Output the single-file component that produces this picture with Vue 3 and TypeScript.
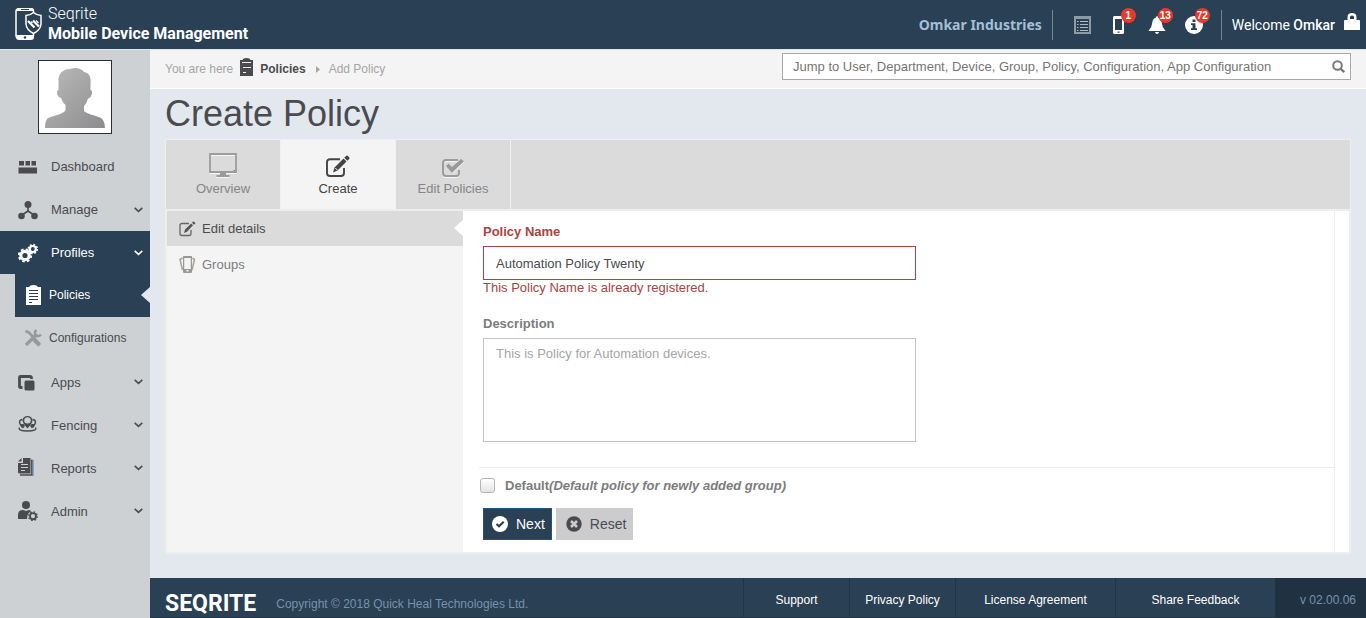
<script setup lang="ts">
import { ref } from 'vue'

interface NavItem {
  key: string
  label: string
  expandable: boolean
}

const topNav: NavItem[] = [
  { key: 'dashboard', label: 'Dashboard', expandable: false },
  { key: 'manage', label: 'Manage', expandable: true },
  { key: 'profiles', label: 'Profiles', expandable: true },
]
const bottomNav: NavItem[] = [
  { key: 'apps', label: 'Apps', expandable: true },
  { key: 'fencing', label: 'Fencing', expandable: true },
  { key: 'reports', label: 'Reports', expandable: true },
  { key: 'admin', label: 'Admin', expandable: true },
]

const policyName = ref('Automation Policy Twenty')
const description = ref('')
const isDefault = ref(false)
const search = ref('')

function reset(): void {
  policyName.value = ''
  description.value = ''
  isDefault.value = false
}
</script>

<template>
  <div class="page">
    <header class="topbar">
      <a href="#" class="brand">
        <svg class="brand-icon" width="27" height="34" viewBox="0 0 27 34" fill="none">
          <path d="M11 31H3.500Q1 31 1 28.500V4.500Q1 2 3.500 2H16Q18.500 2 18.500 4.500V6M18.500 27V29" stroke="#fff" stroke-width="1.500" />
          <path d="M1 4Q1 1 4 1H16Q19 1 19 4ZM1 28H19V30Q19 33 16 33H4Q1 33 1 30Z" fill="#fff" />
          <path d="M6 2.500H14" stroke="#2a4054" />
          <circle cx="10" cy="30.500" r="1.300" fill="#2a4054" />
          <path d="M18.500 5.500Q22 8.500 26 8.500V17Q25.500 23 18.500 26.500Q11.500 23 11 17V8.500Q15 8.500 18.500 5.500Z" fill="#2a4054" stroke="#fff" stroke-width="1.500" />
          <path d="M13 14L19.500 20.500M18 13.500L24 19.500" stroke="#fff" stroke-width="2.200" />
          <path d="M16 14.500L17.500 16M21 13.500L23.500 16" stroke="#fff" stroke-width="1.200" />
        </svg>
        <span class="brand-text"><span>Seqrite</span><strong>Mobile Device Management</strong></span>
      </a>
      <div class="top-right">
        <span class="company">Omkar Industries</span>
        <span class="divider"></span>
        <div class="notices">
          <button type="button" class="notice" aria-label="Activity list">
            <svg width="18" height="18" viewBox="0 0 18 18"><path fill="#8e9aa4" d="M0 0H17V18H0Z" /><path fill="#2a4054" d="M2 3H15V16H2Z" /><path fill="none" stroke="#b0b9c0" d="M3 5.500H4.500M6 5.500H14M3 8.500H4.500M6 8.500H14M3 11.500H4.500M6 11.500H14M3 14.500H4.500M6 14.500H14" /></svg>
          </button>
          <button type="button" class="notice" aria-label="Devices">
            <svg width="18" height="18" viewBox="0 0 18 18"><path fill="#fff" fill-rule="evenodd" d="M3.500 0H11.500Q13 0 13 1.500V16.500Q13 18 11.500 18H3.500Q2 18 2 16.500V1.500Q2 0 3.500 0ZM4 3V14H11V3ZM6.500 15.500V16.700H8.500V15.500Z" /></svg>
            <span class="badge">1</span>
          </button>
          <button type="button" class="notice" aria-label="Alerts">
            <svg width="18" height="18" viewBox="0 0 18 18"><path fill="#fff" d="M9 0Q10 0 10 1.500Q13.500 2.500 13.800 7Q14 11 17.500 15H.5Q4 11 4.200 7Q4.500 2.500 8 1.500Q8 0 9 0ZM7 16H11Q10.500 18 9 18T7 16Z" /></svg>
            <span class="badge">13</span>
          </button>
          <button type="button" class="notice" aria-label="Information">
            <svg width="18" height="18" viewBox="0 0 18 18"><circle cx="9" cy="9" r="9" fill="#fff" /><path fill="#2a4054" d="M7.500 3.500H10.500V6H7.500ZM6 7.300H10.500V12.200H12V14H6V12.200H7.500V9H6Z" /></svg>
            <span class="badge">72</span>
          </button>
        </div>
        <span class="divider"></span>
        <span class="welcome">Welcome <b>Omkar</b></span>
        <button type="button" class="lock" aria-label="Log out">
          <svg width="16" height="18" viewBox="0 0 16 18"><path fill="#fff" fill-rule="evenodd" d="M3.500 7V4Q3.500 0 8 0T12.500 4V7H15Q16 7 16 8V17H0V8Q0 7 1 7ZM6 6H10V4Q10 2.500 8 2.500T6 4Z" /></svg>
        </button>
      </div>
    </header>

    <div class="body">
      <aside class="sidebar">
        <div class="avatar">
          <svg width="60" height="60" viewBox="0 0 60 60">
            <defs><linearGradient id="person" x1="0" y1="0" x2="1" y2="1"><stop offset="0" stop-color="#bbb" /><stop offset="1" stop-color="#8c8c8e" /></linearGradient></defs>
            <path fill="url(#person)" d="M0 60Q0 51 4 49.500C10 47.500 19 46 20.500 42V37Q17 34 16 30Q12 29 12 23.500Q12 22 13.500 22V11C14 4 20 1 25 1Q31-1 35 1Q38 2 39 4C45 5 46 10 45.500 15V22Q47.500 22 47 25Q46 30 43 30.500Q42 35 39 38V43C42 46 50 47.500 55 49.500Q60 52 60 60Z" />
          </svg>
        </div>
        <nav aria-label="Main">
          <a v-for="item in topNav" :key="item.key" href="#" class="nav-row" :class="{ active: item.key === 'profiles' }">
            <svg v-if="item.key === 'dashboard'" class="nav-icon" width="20" height="20" viewBox="0 0 20 20" fill="currentColor"><path d="M1 4H6V8.500H1ZM7.500 4H12V8.500H7.500ZM13.500 4H18V8.500H13.500ZM.5 10.500H19V16.500H.5Z" /></svg>
            <svg v-else-if="item.key === 'manage'" class="nav-icon" width="20" height="20" viewBox="0 0 20 20" fill="currentColor"><circle cx="10" cy="4.500" r="3.500" /><circle cx="3.500" cy="16" r="3.300" /><circle cx="16.500" cy="16" r="3.300" /><path d="M10 5V11L4 15M10 11L16 15" fill="none" stroke="currentColor" stroke-width="1.600" /></svg>
            <svg v-else class="nav-icon" width="20" height="20" viewBox="0 0 20 20" fill="none" stroke="currentColor">
              <circle cx="7" cy="12.500" r="4.200" stroke-width="3.200" /><circle cx="7" cy="12.500" r="6.200" stroke-width="1.800" stroke-dasharray="2.600 2.270" />
              <circle cx="14.800" cy="6" r="3" stroke-width="2.200" /><circle cx="14.800" cy="6" r="4.500" stroke-width="1.500" stroke-dasharray="1.800 1.730" />
            </svg>
            <span>{{ item.label }}</span>
            <svg v-if="item.expandable" class="chevron" width="9" height="6" viewBox="0 0 9 6" fill="none" stroke="currentColor" stroke-width="1.600"><path d="M.7 .8L4.500 4.300L8.300 .8" /></svg>
          </a>
          <a href="#" class="sub-row current">
            <svg width="18" height="20" viewBox="0 0 18 20"><path fill="#fff" d="M2 2H5Q6 0 9.500 0T14 2H17V20H2Z" /><path d="M5 5.500H14M5 8.500H14M5 11.500H14M5 14.500H14M5 17.500H8" stroke="#2a4054" /></svg>
            <span>Policies</span>
          </a>
          <a href="#" class="sub-row">
            <svg width="18" height="18" viewBox="0 0 18 18" fill="none" stroke="#98999b"><path d="M1.500 2L5 3.500L16 15.500" stroke-width="2.600" /><path d="M9.500 10.500L15.500 16.500" stroke-width="3.400" /><path d="M2 16L12 6" stroke-width="3.200" /><path d="M12.500 1Q9.500 3.500 12 6T17 5.500" stroke-width="2.500" /></svg>
            <span>Configurations</span>
          </a>
          <a v-for="item in bottomNav" :key="item.key" href="#" class="nav-row lower">
            <svg v-if="item.key === 'apps'" class="nav-icon" width="20" height="20" viewBox="0 0 20 20"><path d="M4.500 15.500H2.500Q1.500 15.500 1.500 14.500V5.500Q1.500 4.500 2.500 4.500H12Q13.500 4.500 13.500 6V7" fill="none" stroke="currentColor" stroke-width="2.800" /><rect x="6.500" y="8.500" width="10" height="10" rx="1.500" fill="currentColor" /></svg>
            <svg v-else-if="item.key === 'fencing'" class="nav-icon" width="20" height="20" viewBox="0 0 20 20" fill="none" stroke="currentColor" stroke-width="1.400">
              <path d="M4.500 12.500Q1.500 9 1.500 7Q1.800 4.500 4.500 4.500M14.500 4.500Q17.300 4.500 17.500 7Q17.500 9 14.500 12.500" />
              <path d="M2.200 9H5.500L7 11L5 13.500ZM16.800 9H13.500L12 11L14 13.500Z" fill="currentColor" stroke="none" />
              <path fill="currentColor" fill-rule="evenodd" stroke="none" d="M9.500 13.500Q4.500 8 4.500 5.500Q5 1 9.500 1T14.500 5.500Q14.500 8 9.500 13.500ZM9.500 2.300Q6.200 2.500 6.200 5.500T9.500 8.500T12.800 5.500T9.500 2.300Z" />
              <path d="M1.500 12.500Q-.5 16 9.500 16T17.500 12.500" />
            </svg>
            <svg v-else-if="item.key === 'reports'" class="nav-icon" width="20" height="20" viewBox="0 0 20 20"><path d="M5 0H12.500V15.500H1.500Q0 15.500 0 14V5H5ZM0 3.500L3.500 0V3.500Z" fill="currentColor" /><path d="M3 6.500H10M3 9.500H10M3 12.500H7" stroke="#cdd1d3" stroke-width="1.200" /><path d="M13.800 1.500V17H2" fill="none" stroke="currentColor" stroke-width="1.400" /><path d="M15 2V18" stroke="#417da5" /></svg>
            <svg v-else class="nav-icon" width="20" height="20" viewBox="0 0 20 20" fill="currentColor"><circle cx="8" cy="4" r="4" /><path d="M0 18V14Q0 9 5 9L8 10L11 9Q13 9 13 10.500Q9 12 9 18Z" /><circle cx="15" cy="15.200" r="3" fill="none" stroke="currentColor" stroke-width="1.800" /><circle cx="15" cy="15.200" r="4.300" fill="none" stroke="currentColor" stroke-width="1.300" stroke-dasharray="1.700 1.670" /></svg>
            <span>{{ item.label }}</span>
            <svg class="chevron" width="9" height="6" viewBox="0 0 9 6" fill="none" stroke="currentColor" stroke-width="1.600"><path d="M.7 .8L4.500 4.300L8.300 .8" /></svg>
          </a>
        </nav>
      </aside>

      <div class="content">
        <div class="crumb-bar">
          <nav class="crumbs" aria-label="Breadcrumb">
            <span>You are here</span>
            <svg class="crumb-clip" width="13" height="18" viewBox="0 0 13 18"><path fill="#4b4b4f" d="M0 2H2.500Q3 0 6.500 0T10.500 2H13V18H0Z" /><path d="M2 4.500H11M3 9.500H11M3 14.500H6" stroke="#f4f4f4" /></svg>
            <a href="#">Policies</a>
            <svg class="crumb-arrow" width="4" height="7" viewBox="0 0 4 7"><path fill="#a5a5a5" d="M0 0L4 3.500L0 7Z" /></svg>
            <span>Add Policy</span>
          </nav>
          <form class="search" role="search" @submit.prevent>
            <input v-model="search" type="text" aria-label="Jump to" placeholder="Jump to User, Department, Device, Group, Policy, Configuration, App Configuration" />
            <button type="submit" aria-label="Search"><svg width="13" height="13" viewBox="0 0 13 13" fill="none" stroke="#777"><circle cx="5.500" cy="5.500" r="4.300" stroke-width="2" /><path d="M8.700 8.700L12.200 12.200" stroke-width="2.300" /></svg></button>
          </form>
        </div>

        <main>
          <h1>Create Policy</h1>
          <section class="panel">
            <div class="tabs">
              <button type="button" class="tab">
                <svg width="28" height="26" viewBox="0 0 28 26"><path d="M1 1H27V19H1Z" fill="none" stroke="#9c9c9c" stroke-width="1.800" /><path d="M11 20H17V22H20.500V24H7.500V22H11Z" fill="#9c9c9c" /><path d="M2 2.500H26M0 20.500H11M17 20.500H28M7 24.500H21" stroke="#f5f5f5" /><path d="M24.500 17.500H26" stroke="#888" /></svg>
                <span>Overview</span>
              </button>
              <button type="button" class="tab selected">
                <svg width="26" height="26" viewBox="0 0 26 26"><path d="M15 6.200H5Q2 6.200 2 9V20Q2 23 5 23H16Q19 23 19 20V15" fill="none" stroke="#444" stroke-width="1.900" /><path d="M8 19.500L9.500 14.500L18.500 5.500L21.500 8.500L12.500 17.500ZM19.300 4.700L21 3Q22 2.200 23 3L24.300 4.500Q25 5.300 24.200 6L22.300 7.700Z" fill="#444" /><path d="M10.300 15L12.300 17" stroke="#f4f4f4" /></svg>
                <span>Create</span>
              </button>
              <button type="button" class="tab">
                <svg width="26" height="26" viewBox="0 0 26 26"><path d="M18 8H6Q3 8 3 11V21Q3 24 6 24H16Q19 24 19 21V18" fill="none" stroke="#f5f5f5" stroke-width="2" /><path d="M18 7H6Q3 7 3 10V20Q3 23 6 23H16Q19 23 19 20V17" fill="none" stroke="#9c9c9c" stroke-width="2" /><path d="M6 13L8.500 10.500L12 14L21 6L24 8.500L12 20Z" fill="#999" /><path d="M12 20.500L24 9" stroke="#f5f5f5" /></svg>
                <span>Edit Policies</span>
              </button>
            </div>
            <div class="panel-body">
              <nav class="steps" aria-label="Policy sections">
                <a href="#" class="step chosen">
                  <svg width="17" height="16" viewBox="0 0 17 16"><path d="M10 2.500H3Q1 2.500 1 4.500V12.500Q1 14.500 3 14.500H10Q12 14.500 12 12.500V9" fill="none" stroke="#666" stroke-width="1.300" /><path d="M5 12L6 8.500L12.200 2.500L14 4.300L8 10.800ZM13 1.700L14.500 .2L16.500 2.200L15 3.700Z" fill="#555" /></svg>
                  <span>Edit details</span>
                </a>
                <a href="#" class="step">
                  <svg width="17" height="18" viewBox="0 0 17 18"><path d="M3.500 2L1 3.500L3.500 14M13.500 2L15.500 3.500L13 14" fill="none" stroke="#aaa59d" stroke-width="1.600" /><path fill="#999" fill-rule="evenodd" d="M4.500 0H12.500Q13 0 13 1V16Q13 17 12 17H5Q4 17 4 16V1Q4 0 4.500 0ZM5.500 2V13H11.500V2ZM7.500 14V15.500H9.500V14Z" /><path fill="#f4f4f4" d="M5.500 2H11.500V13H5.500Z" /></svg>
                  <span>Groups</span>
                </a>
              </nav>
              <form class="editor" @submit.prevent>
                <div class="fields">
                  <label for="policy-name" class="invalid">Policy Name</label>
                  <input id="policy-name" v-model="policyName" type="text" aria-invalid="true" aria-describedby="name-error" />
                  <p id="name-error">This Policy Name is already registered.</p>
                  <label for="description">Description</label>
                  <textarea id="description" v-model="description" placeholder="This is Policy for Automation devices."></textarea>
                </div>
                <div class="default-row">
                  <input id="default-policy" v-model="isDefault" type="checkbox" />
                  <label for="default-policy">Default<em>(Default policy for newly added group)</em></label>
                </div>
                <div class="actions">
                  <button type="submit" class="next"><svg width="16" height="16" viewBox="0 0 16 16"><circle cx="8" cy="8" r="8" fill="#fff" /><path d="M4.500 8L7 10.300L11.700 5.700" fill="none" stroke="#2a4054" stroke-width="2.200" /></svg><span>Next</span></button>
                  <button type="button" class="reset" @click="reset"><svg width="16" height="16" viewBox="0 0 16 16"><circle cx="8" cy="8" r="7.700" fill="#4b4b4f" /><path d="M5 5L11 11M11 5L5 11" stroke="#ccc" stroke-width="2.600" /></svg><span>Reset</span></button>
                </div>
              </form>
              <div class="gutter"></div>
            </div>
          </section>
        </main>

        <footer>
          <strong class="logo">SEQRITE</strong>
          <span class="copyright">Copyright © 2018 Quick Heal Technologies Ltd.</span>
          <nav class="foot-links" aria-label="Footer">
            <a href="#" class="narrow">Support</a>
            <a href="#" class="narrow">Privacy Policy</a>
            <a href="#">License Agreement</a>
            <a href="#">Share Feedback</a>
          </nav>
          <span class="version">v 02.00.06</span>
        </footer>
      </div>
    </div>
  </div>
</template>

<style>
body { margin: 0; }
</style>

<style scoped>
* { box-sizing: border-box; }
.page { display: flex; flex-direction: column; min-height: 100vh; font: 13px/18px "Liberation Sans", Arial, sans-serif; color: #4b4b4f; background: #e3e8ef; }
a { color: inherit; text-decoration: none; }
button { font: inherit; color: inherit; margin: 0; padding: 0; border: 0; background: none; cursor: pointer; }
input, textarea { font: inherit; color: inherit; margin: 0; }
svg { display: block; flex: none; }

.topbar { display: flex; align-items: center; justify-content: space-between; height: 50px; padding: 0 6px 0 15px; color: #fff; background: #2a4054; border-bottom: 1px solid #e3e6e8; }
.brand { display: flex; align-items: center; gap: 6px; padding-bottom: 2px; font: 16px/20px Roboto, sans-serif; }
.brand-text { display: flex; flex-direction: column; }
.brand-text span { font-weight: 300; }
.brand-text strong { font-weight: 700; }
.top-right { display: flex; align-items: center; }
.company { font: 700 14px/20px "Noto Sans", sans-serif; color: #a5bfd4; margin-right: 10px; }
.divider { width: 1px; height: 30px; background: #77838e; }
.notices { display: flex; gap: 19px; margin: 0 18px 0 21px; }
.notice { position: relative; width: 18px; height: 18px; }
.badge { position: absolute; left: 10px; top: -8px; min-width: 15px; height: 15px; border-radius: 8px; background: #e8392b; color: #fff; font: 700 10px/15px "Liberation Sans", Arial, sans-serif; text-align: center; }
.welcome { font: 400 14px/20px Roboto, sans-serif; margin: 0 9px 0 10px; }
.welcome b { font-weight: 500; }
.lock { margin-bottom: 6px; }

.body { flex: 1; display: flex; }
.sidebar { flex: 0 0 150px; padding-top: 10px; background: #cdd1d3; }
.avatar { display: flex; align-items: center; justify-content: center; width: 74px; height: 74px; margin: 0 auto 11px 38px; padding-top: 2px; background: #fff; border: 1px solid #2d2d2f; }
.nav-row { display: flex; align-items: center; height: 43px; padding: 0 7px 0 18px; }
.nav-row.active { color: #fff; background: #2a4054; }
.nav-row.lower span { padding-top: 3px; }
.nav-icon { margin-right: 13px; }
.chevron { margin-left: auto; }
.sub-row { position: relative; display: flex; align-items: center; gap: 7px; height: 43px; margin-left: 15px; padding: 0 0 2px 9px; font-size: 12px; }
.sub-row.current { color: #fff; background: #2a4054; }
.sub-row.current::after { content: ""; position: absolute; right: 0; top: 13px; border: solid transparent; border-width: 8px 9px 8px 0; border-right-color: #e3e8ef; }

.content { flex: 1; min-width: 0; display: flex; flex-direction: column; }
.crumb-bar { display: flex; align-items: flex-start; justify-content: space-between; height: 39px; padding: 3px 15px 0; background: #f4f4f4; border-bottom: 1px solid #fff; }
.crumbs { display: flex; align-items: center; height: 32px; font-size: 12px; color: #a5a5a5; }
.crumbs a { font-weight: 700; color: #4b4b4f; }
.crumb-clip { margin: 0 7px 4px; }
.crumb-arrow { margin: 0 9px 0 10px; }
.search { display: flex; align-items: center; flex: 0 1 569px; height: 27px; background: #fff; border: 1px solid #aaa; }
.search input { flex: 1; min-width: 0; padding: 0 10px; border: 0; outline: 0; background: none; }
.search input::placeholder { color: #757575; opacity: 1; }
.search button { margin-right: 5px; }

main { padding: 0 15px 24px; }
h1 { margin: 0; font-size: 36px; line-height: 50px; font-weight: 400; }
.panel { border: 1px solid #eee; background: #eee; }
.tabs { display: flex; height: 69px; background: #dbdbdb; }
.tab { flex: 0 0 115px; display: flex; flex-direction: column; align-items: center; gap: 1px; padding-top: 13px; color: #858585; border-right: 1px solid #f0f0f0; }
.tab svg { height: 26px; }
.tab.selected { color: #444; background: #f4f4f4; }
.panel-body { display: flex; margin: 2px 1px 1px; background: #fff; }
.steps { flex: 0 0 296px; background: #f4f4f4; }
.step { position: relative; display: flex; align-items: center; gap: 6px; height: 36px; padding-left: 12px; color: #7c7c7e; }
.step.chosen { height: 35px; margin-bottom: 1px; color: #4b4b4f; background: #dbdbdb; }
.step.chosen::after { content: ""; position: absolute; right: 0; top: 9px; border: solid transparent; border-width: 8px 9px 8px 0; border-right-color: #fff; }
.editor { flex: 1; padding: 12px 0 12px 16px; }
.gutter { width: 15px; border-left: 1px solid #eee; }
.fields { display: flex; flex-direction: column; max-width: 437px; padding-left: 4px; }
.fields label { margin-bottom: 5px; font-weight: 700; color: #7c7c7e; }
.fields .invalid { color: #a94442; }
.fields input { height: 34px; padding: 0 12px; border: 1px solid #a94442; background: #fff; }
.fields p { margin: 0 0 19px; line-height: 16px; color: #a94442; }
.fields textarea { height: 104px; padding: 6px 12px; border: 1px solid #c4c4c4; resize: none; display: block; }
.fields textarea::placeholder { color: #a5a5a5; opacity: 1; }
.default-row { display: flex; align-items: flex-start; gap: 10px; margin-top: 25px; padding: 9px 0 13px; border-top: 1px solid #eee; }
.default-row input { appearance: none; width: 15px; height: 15px; margin: 1px 0 0 1px; border: 1px solid #b5b5b5; border-radius: 3px; background: linear-gradient(#fff, #e4e4e4); }
.default-row input:checked { background: #2a4054; }
.default-row label { font-weight: 700; color: #7c7c7e; }
.actions { display: flex; gap: 4px; padding-left: 4px; font-size: 14px; }
.actions button { display: flex; align-items: center; gap: 8px; height: 32px; padding: 0 6px 0 8px; border: 1px solid #ccccce; background: #ccccce; }
.actions .next { color: #fff; background: #2a4054; border-color: #1f5484; }
.actions .reset { padding-left: 9px; }

footer { display: flex; align-items: stretch; height: 40px; margin-top: auto; padding-left: 15px; color: #7593ad; background: #2a4054; border-bottom: 1px solid #213444; font-size: 12px; }
.logo { font: 700 23px/28px Roboto, sans-serif; color: #fff; padding-top: 12px; }
.copyright { padding: 17px 0 0 20px; }
.foot-links { display: flex; margin-left: auto; color: #fff; }
.foot-links a { display: flex; align-items: center; justify-content: center; width: 160px; padding-top: 4px; border-left: 1px solid #213444; }
.foot-links .narrow { width: 106px; }
.version { flex: 0 0 91px; padding: 13px 10px 0 0; text-align: right; background: #203241; }
</style>
